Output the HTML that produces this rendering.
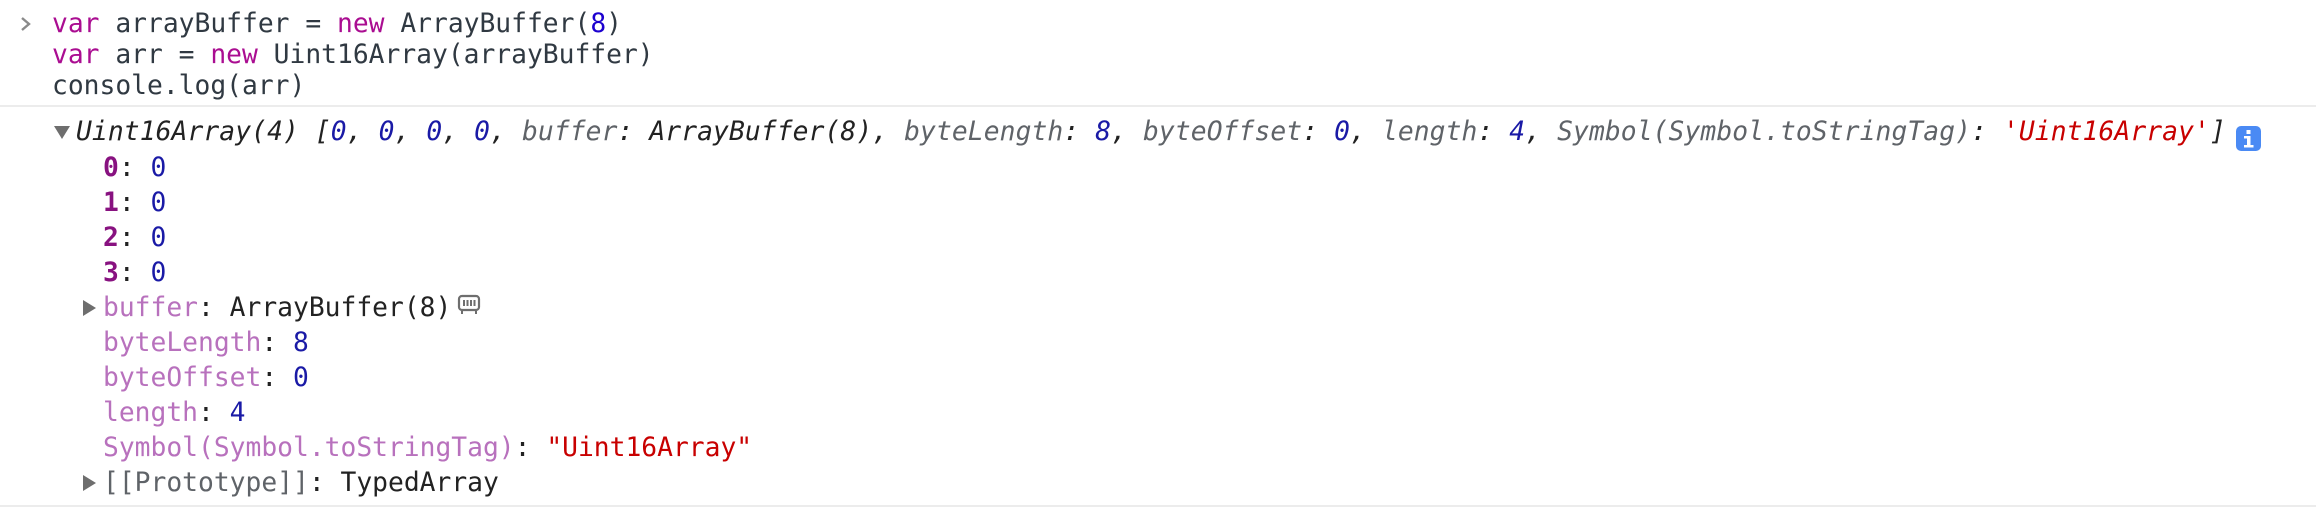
<!DOCTYPE html>
<html><head><meta charset="utf-8"><style>
html,body{margin:0;padding:0;background:#fff;width:2316px;height:508px;overflow:hidden}
.l{position:absolute;white-space:pre;font-family:"DejaVu Sans Mono","Liberation Mono",monospace;font-size:26.3px;line-height:30px;color:#222}
.in{color:#303942}
.kw{color:#aa0d91}
.n{color:#1c00cf}
.it{font-style:italic;letter-spacing:0.09px}
.g{color:#5f6368}
.b{color:#1a1aa6}
.s{color:#c80000}
.ik{color:#881280;font-weight:bold}
.k{color:#b871bd}
.sep{position:absolute;left:0;width:2316px;height:2px;background:#ececec}
.tri{position:absolute;width:0;height:0}
</style></head><body>
<svg style="position:absolute;left:20px;top:16px" width="12" height="16" viewBox="0 0 12 16"><path d="M2 2l7 6-7 6" fill="none" stroke="#8a8a8a" stroke-width="2.4"/></svg>
<div class="l in" style="left:52px;top:9px"><span class="kw">var</span> arrayBuffer = <span class="kw">new</span> ArrayBuffer(<span class="n">8</span>)</div>
<div class="l in" style="left:52px;top:40px"><span class="kw">var</span> arr = <span class="kw">new</span> Uint16Array(arrayBuffer)</div>
<div class="l in" style="left:52px;top:71px">console.log(arr)</div>
<div class="sep" style="top:105px"></div>

<div class="tri" style="left:54px;top:126px;border-left:8px solid transparent;border-right:8px solid transparent;border-top:13px solid #6e6e6e"></div>
<div class="l it" style="left:76px;top:117px">Uint16Array(4) [<span class="b">0</span>, <span class="b">0</span>, <span class="b">0</span>, <span class="b">0</span>, <span class="g">buffer</span>: ArrayBuffer(8), <span class="g">byteLength</span>: <span class="b">8</span>, <span class="g">byteOffset</span>: <span class="b">0</span>, <span class="g">length</span>: <span class="b">4</span>, <span class="g">Symbol(Symbol.toStringTag)</span>: <span class="s">'Uint16Array'</span>]</div>
<svg style="position:absolute;left:2236px;top:126px" width="25" height="25" viewBox="0 0 25 25"><rect x="0" y="0" width="25" height="25" rx="5" fill="#4a8af4"/><rect x="10.5" y="4" width="4" height="4" fill="#fff"/><path d="M8 10h6.5v9h3v2.5h-9.5v-2.5h3v-6.5h-3z" fill="#fff"/></svg>

<div class="l" style="left:103px;top:153px"><span class="ik">0</span>: <span class="b">0</span></div>
<div class="l" style="left:103px;top:188px"><span class="ik">1</span>: <span class="b">0</span></div>
<div class="l" style="left:103px;top:223px"><span class="ik">2</span>: <span class="b">0</span></div>
<div class="l" style="left:103px;top:258px"><span class="ik">3</span>: <span class="b">0</span></div>

<div class="tri" style="left:83px;top:300px;border-top:8px solid transparent;border-bottom:8px solid transparent;border-left:13px solid #6e6e6e"></div>
<div class="l" style="left:103px;top:293px"><span class="k">buffer</span>: ArrayBuffer(8)</div>
<svg style="position:absolute;left:457px;top:294px" width="24" height="20" viewBox="0 0 24 20"><rect x="2" y="2" width="20" height="14" rx="3" fill="none" stroke="#6e6e6e" stroke-width="2.2"/><path d="M7 6v6M10.5 6v6M14 6v6M17.5 6v6M5 17v3M19 17v3" stroke="#6e6e6e" stroke-width="2"/></svg>
<div class="l" style="left:103px;top:328px"><span class="k">byteLength</span>: <span class="b">8</span></div>
<div class="l" style="left:103px;top:363px"><span class="k">byteOffset</span>: <span class="b">0</span></div>
<div class="l" style="left:103px;top:398px"><span class="k">length</span>: <span class="b">4</span></div>
<div class="l" style="left:103px;top:433px"><span class="k">Symbol(Symbol.toStringTag)</span>: <span class="s">"Uint16Array"</span></div>
<div class="tri" style="left:83px;top:475px;border-top:8px solid transparent;border-bottom:8px solid transparent;border-left:13px solid #6e6e6e"></div>
<div class="l" style="left:103px;top:468px"><span class="g">[[Prototype]]</span>: TypedArray</div>
<div class="sep" style="top:505px"></div>
</body></html>
